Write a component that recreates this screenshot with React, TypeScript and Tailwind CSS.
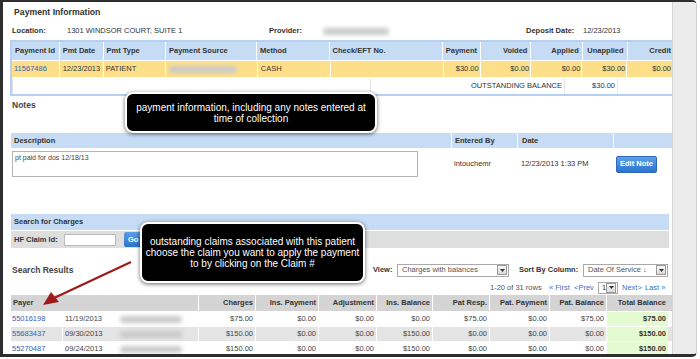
const payCols = [
  { label: 'Payment Id', w: 51, right: false },
  { label: 'Pmt Date', w: 47, right: false },
  { label: 'Pmt Type', w: 67, right: false },
  { label: 'Payment Source', w: 98, right: false },
  { label: 'Method', w: 78, right: false },
  { label: 'Check/EFT No.', w: 122, right: false },
  { label: 'Payment', w: 39, right: true },
  { label: 'Voided', w: 54, right: true },
  { label: 'Applied', w: 55, right: true },
  { label: 'Unapplied', w: 48, right: true },
];

const resultHeads = ['Charges', 'Ins. Payment', 'Adjustment', 'Ins. Balance', 'Pat Resp.', 'Pat. Payment', 'Pat. Balance', 'Total Balance'];

const results = [
  { id: '55016198', date: '11/19/2013', vals: ['$75.00', '$0.00', '$0.00', '$0.00', '$75.00', '$0.00', '$75.00', '$75.00'] },
  { id: '55683437', date: '09/30/2013', vals: ['$150.00', '$0.00', '$0.00', '$150.00', '$0.00', '$0.00', '$0.00', '$150.00'] },
  { id: '55270487', date: '09/24/2013', vals: ['$150.00', '$0.00', '$0.00', '$150.00', '$0.00', '$0.00', '$0.00', '$150.00'] },
];

function Blob({ w }: { w: number }) {
  return <div className="h-[7px] rounded-full bg-[#c9c9c9] blur-[2px]" style={{ width: w }} />;
}

function DropBtn() {
  return (
    <div className="w-[10px] h-[10px] border border-[#9a9a9a] bg-gradient-to-b from-[#fafafa] to-[#d9d9d9] flex items-center justify-center">
      <svg width="5" height="3" viewBox="0 0 5 3"><path d="M0 0h5L2.5 3z" fill="#333" /></svg>
    </div>
  );
}

function Select({ w, text }: { w: number; text: string }) {
  return (
    <div className="h-[13px] border border-[#a9a9a9] bg-white flex items-center justify-between pl-[4px] pr-[1px] text-[#555]" style={{ width: w }}>
      <span>{text}</span>
      <DropBtn />
    </div>
  );
}

export default function App() {
  return (
    <div className="relative w-[700px] h-[359px] bg-white overflow-hidden font-['Liberation_Sans',Arial,sans-serif] text-[7.5px] text-[#333]">
      <div className="w-[697px] h-[357px] border-t-2 border-l-[3px] border-b-[3px] border-r border-[#2e2e2e] border-r-[#cfcfcf] rounded-tr-[5px] rounded-br-[5px] flex overflow-hidden">
        <div className="w-[669px] shrink-0 overflow-hidden">
          {/* title */}
          <div className="h-[22px] flex items-center pl-[11px] text-[8.7px] font-bold">Payment Information</div>
          {/* location row */}
          <div className="h-[14px] flex items-center pl-[9px]">
            <div className="w-[55px] font-bold">Location:</div>
            <div className="w-[202px]">1301 WINDSOR COURT, SUITE 1</div>
            <div className="w-[54px] font-bold">Provider:</div>
            <div className="w-[203px]"><Blob w={66} /></div>
            <div className="w-[57px] font-bold">Deposit Date:</div>
            <div>12/23/2013</div>
          </div>
          {/* payment table */}
          <div className="mt-[2px] ml-[7px] border-2 border-r-0 border-[#b5d0f0]">
            <div className="flex h-[18px] bg-[#c6dcf5] font-bold">
              {payCols.map((c) => (
                <div key={c.label} className={`h-full flex items-center border-r border-white px-[3px] ${c.right ? 'justify-end' : ''}`} style={{ width: c.w }}>
                  {c.label}
                </div>
              ))}
              <div className="w-[48px] h-full flex items-center justify-end pr-[1px]">Credit</div>
            </div>
            <div className="flex h-[16px] mt-px bg-[#fddf8a]">
              <div className="w-[51px] flex items-center pl-[2px] border-r border-white text-[#3562b3]">11567486</div>
              <div className="w-[47px] flex items-center pl-[3px] border-r border-white">12/23/2013</div>
              <div className="w-[67px] flex items-center pl-[2px] border-r border-white">PATIENT</div>
              <div className="w-[98px] flex items-center pl-[3px] border-r border-white"><Blob w={68} /></div>
              <div className="w-[78px] flex items-center pl-[3px] border-r border-white">CASH</div>
              <div className="w-[122px] border-r border-white" />
              <div className="w-[39px] flex items-center justify-end pr-[1px] border-r border-white">$30.00</div>
              <div className="w-[54px] flex items-center justify-end pr-[1px] border-r border-white">$0.00</div>
              <div className="w-[55px] flex items-center justify-end pr-[1px] border-r border-white">$0.00</div>
              <div className="w-[48px] flex items-center justify-end pr-[1px] border-r border-white">$30.00</div>
              <div className="w-[48px] flex items-center justify-end pr-[1px]">$0.00</div>
            </div>
            <div className="flex h-[16px] mt-px border-l border-[#e3e3e3]">
              <div className="w-[357px]" />
              <div className="w-[195px] flex items-center justify-end pr-[2px] border-x border-[#e6e6e6]">OUTSTANDING BALANCE</div>
              <div className="w-[53px] flex items-center justify-end pr-[2px] border-r border-[#e6e6e6]">$30.00</div>
            </div>
          </div>
          {/* notes */}
          <div className="h-[37px] pl-[9px] pt-[4px] leading-[10px] text-[8.5px] font-bold text-[#444]">Notes</div>
          <div className="ml-[8px] flex h-[15px] bg-[#c6dcf5] font-bold">
            <div className="w-[441px] flex items-center pl-[3px] border-r border-white">Description</div>
            <div className="w-[66px] flex items-center pl-[3px] border-r border-white">Entered By</div>
            <div className="w-[96px] flex items-center pl-[4px] border-r border-white">Date</div>
            <div className="w-[55px]" />
          </div>
          <div className="ml-[8px] flex h-[32px] items-center">
            <div className="w-[441px] pl-px">
              <div className="w-[406px] h-[26px] border border-[#b4b4b4] px-[2px] pt-px text-[7px] text-[#444]">pt paid for dos 12/18/13</div>
            </div>
            <div className="w-[66px] pl-[2px]">intouchemr</div>
            <div className="w-[96px] pl-[3px]">12/23/2013 1:33 PM</div>
            <div className="w-[55px] pl-[2px]">
              <div className="w-[41px] h-[17px] rounded-[2px] border border-[#2d69b8] bg-gradient-to-b from-[#5aa2ea] to-[#2c74cf] text-white font-bold flex items-center justify-center">Edit Note</div>
            </div>
          </div>
          {/* search for charges */}
          <div className="mt-[34px] ml-[8px] w-[658px] h-[16px] bg-[#c6dcf5] font-bold flex items-center pl-[3px]">Search for Charges</div>
          <div className="mt-px ml-[8px] w-[658px] h-[17px] bg-[#dedede] flex items-center pl-[3px]">
            <div className="w-[50px] font-bold">HF Claim Id:</div>
            <div className="w-[52px] h-[12px] bg-white border border-[#b9b9b9]" />
            <div className="ml-[8px] w-[24px] h-[15px] rounded-[2px] bg-gradient-to-b from-[#5a9ee6] to-[#2c72cc] text-white font-bold flex items-center pl-[4px]">Go</div>
          </div>
          {/* search results */}
          <div className="mt-[15px] h-[14px] flex items-center pl-[9px]">
            <div className="w-[361px] text-[8.5px] font-bold text-[#444]">Search Results</div>
            <div className="w-[24px] font-bold">View:</div>
            <Select w={112} text="Charges with balances" />
            <div className="ml-[10px] w-[64px] font-bold">Sort By Column:</div>
            <Select w={85} text="Date Of Service ↓" />
          </div>
          <div className="mt-[4px] h-[13px] flex items-center pl-[487px] text-[#555]">
            <span className="w-[59px]">1-20 of 31 rows</span>
            <span className="w-[25px] text-[#3b6fc7]">« First</span>
            <span className="w-[24px] text-[#3b6fc7]">&lt;Prev</span>
            <div className="w-[20px] h-[12px] border border-[#a9a9a9] flex items-center justify-between pl-[3px] pr-px text-[#333]">
              <span>1</span>
              <DropBtn />
            </div>
            <span className="ml-[4px] w-[23px] text-[#3b6fc7]">Next&gt;</span>
            <span className="text-[#3b6fc7]">Last »</span>
          </div>
          <div className="mt-px ml-[8px]">
            <div className="flex h-[16px] bg-[#d4d4d4] font-bold">
              <div className="w-[188px] flex items-center pl-[2px] border-r border-white">Payer</div>
              {resultHeads.map((h, i) => (
                <div key={h} className={`flex items-center justify-end pr-[2px] ${i < 7 ? 'border-r border-white' : ''}`} style={{ width: [57, 63, 58, 56, 57, 60, 57, 61][i] }}>
                  {h}
                </div>
              ))}
            </div>
            {results.map((r, ri) => (
              <div key={r.id} className={`flex h-[15px] border-t border-white text-[#444] ${ri === 1 ? 'bg-[#e4e4e4]' : 'bg-white'}`}>
                <div className="w-[52px] flex items-center pl-[1px] border-r border-white text-[#3562b3]">{r.id}</div>
                <div className="w-[55px] flex items-center pl-[2px]">{r.date}</div>
                <div className="w-[81px] flex items-center pl-[2px] border-r border-white"><Blob w={62} /></div>
                {r.vals.map((v, i) => (
                  <div
                    key={i}
                    className={`flex items-center justify-end pr-[2px] ${i < 7 ? 'border-r border-white' : 'bg-[#e4fbd1] font-bold text-[#333]'}`}
                    style={{ width: [57, 63, 58, 56, 57, 60, 57, 61][i] }}
                  >
                    {v}
                  </div>
                ))}
              </div>
            ))}
          </div>
        </div>
        <div className="flex-1 bg-[#ececec] border-l border-[#d4d4d4]" />
      </div>

      {/* callouts */}
      <div className="absolute left-[125px] top-[92px] w-[252px] h-[41px] bg-black text-white border-2 border-white rounded-[8px] shadow-[0_1px_4px_rgba(0,0,0,0.6)] text-[10px] leading-[11px] text-center flex items-center justify-center">
        payment information, including any notes entered at<br />time of collection
      </div>
      <div className="absolute left-[140px] top-[222px] w-[225px] h-[61px] bg-black text-white border-2 border-white rounded-[8px] shadow-[0_1px_4px_rgba(0,0,0,0.6)] text-[10px] leading-[11px] text-center flex items-center justify-center">
        outstanding claims associated with this patient<br />choose the claim you want to apply the payment<br />to by clicking on the Claim #
      </div>
      <svg className="absolute left-0 top-0" width="700" height="359">
        <line x1="131" y1="262" x2="54" y2="298" stroke="#9e1b1b" strokeWidth="2.2" />
        <path d="M43 305 L51 292 L59 302 Z" fill="#9e1b1b" />
      </svg>
    </div>
  );
}
